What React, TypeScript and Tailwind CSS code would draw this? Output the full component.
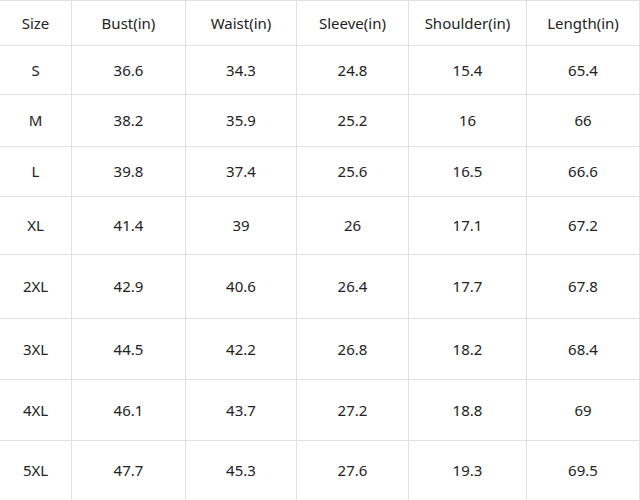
const headers = ["Size", "Bust(in)", "Waist(in)", "Sleeve(in)", "Shoulder(in)", "Length(in)"];

const rows = [
  ["S", "36.6", "34.3", "24.8", "15.4", "65.4"],
  ["M", "38.2", "35.9", "25.2", "16", "66"],
  ["L", "39.8", "37.4", "25.6", "16.5", "66.6"],
  ["XL", "41.4", "39", "26", "17.1", "67.2"],
  ["2XL", "42.9", "40.6", "26.4", "17.7", "67.8"],
  ["3XL", "44.5", "42.2", "26.8", "18.2", "68.4"],
  ["4XL", "46.1", "43.7", "27.2", "18.8", "69"],
  ["5XL", "47.7", "45.3", "27.6", "19.3", "69.5"],
];

const colWidths = ["w-[72px]", "w-[114px]", "w-[111px]", "w-[112px]", "w-[118px]", "w-[113px]"];
const rowHeights = ["h-[49px]", "h-[52px]", "h-[50px]", "h-[58px]", "h-[64px]", "h-[61px]", "h-[61px]", "h-[60px]"];

function Row({ cells, height }: { cells: string[]; height: string }) {
  return (
    <div className={`flex ${height} border-t border-[#e0e0e0]`}>
      {cells.map((c, i) => (
        <div
          key={i}
          className={`${colWidths[i]} shrink-0 flex items-center justify-center border-r border-[#e0e0e0]`}
        >
          {c}
        </div>
      ))}
    </div>
  );
}

export default function App() {
  return (
    <div className="w-[640px] h-[500px] overflow-hidden bg-white text-[15px] text-[#222] font-['Noto_Sans',sans-serif]">
      <Row cells={headers} height="h-[45px]" />
      {rows.map((r, i) => (
        <Row key={i} cells={r} height={rowHeights[i]} />
      ))}
    </div>
  );
}
